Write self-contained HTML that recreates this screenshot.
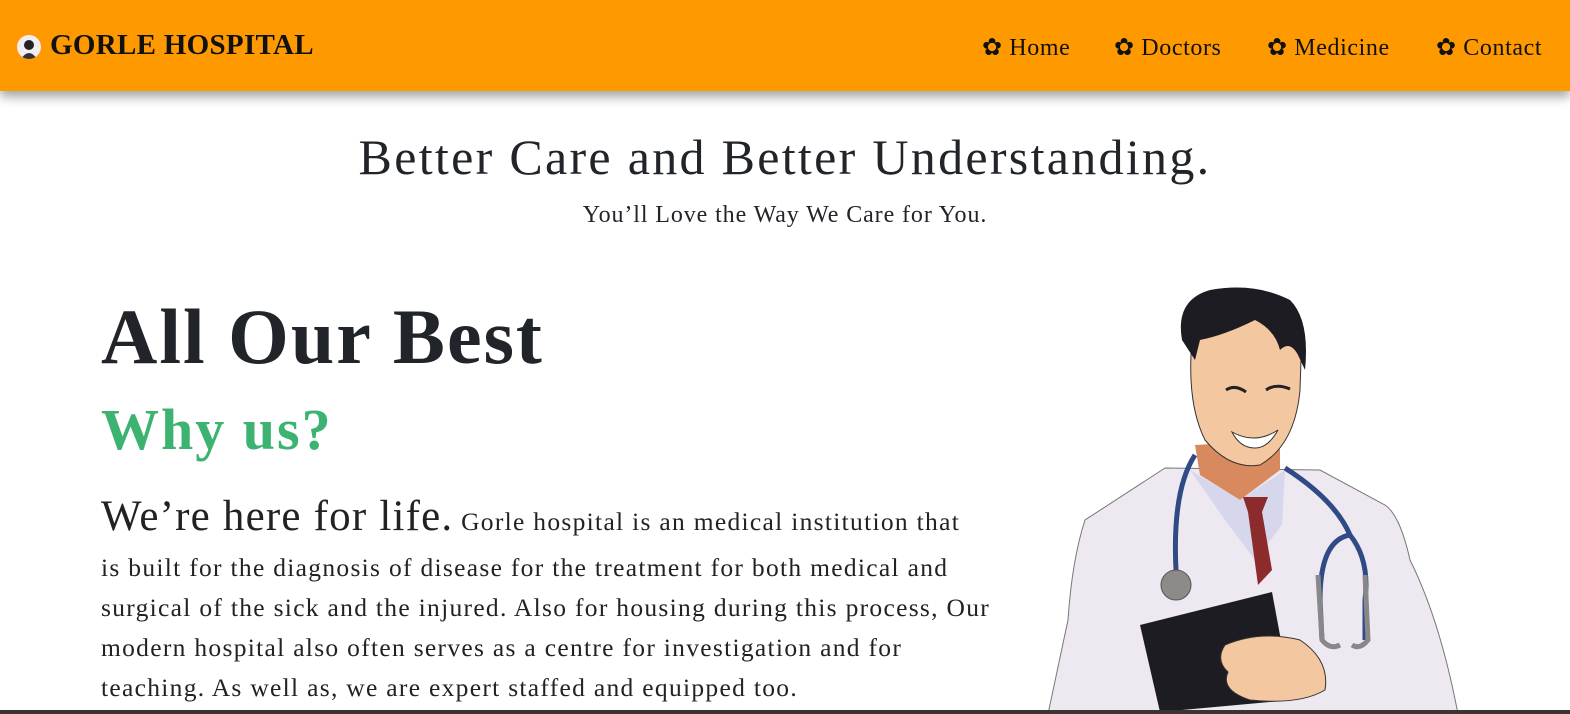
<!DOCTYPE html>
<html><head><meta charset="utf-8"><style>
*{margin:0;padding:0;box-sizing:border-box}
body{width:1570px;height:714px;overflow:hidden;background:#fff;font-family:"Liberation Serif",serif;color:#212529;position:relative}
.nav{position:absolute;left:0;top:0;width:1570px;height:91px;background:#ff9900;box-shadow:0 6px 10px rgba(0,0,0,.35);z-index:2}
.logo{position:absolute;left:50px;top:29px;font-size:29px;font-weight:bold;color:#111;letter-spacing:.3px}
.av{position:absolute;left:17px;top:35px;width:24px;height:24px;border-radius:50%;background:#f4eef4;overflow:hidden}
.nav a{position:absolute;top:33px;font-size:24px;color:#111;text-decoration:none;letter-spacing:.6px}
h1{position:absolute;left:0;width:1570px;text-align:center;top:128px;font-size:50px;font-weight:normal;letter-spacing:2.3px}
.sub{position:absolute;left:0;width:1570px;text-align:center;top:202px;font-size:24px;letter-spacing:.9px}
.best{position:absolute;left:101px;top:292px;font-size:78px;font-weight:bold;letter-spacing:2px}
.why{position:absolute;left:101px;top:396px;font-size:58px;font-weight:bold;color:#3cb371;letter-spacing:2px}
.p{position:absolute;left:101px;top:491px;width:990px;font-size:25.5px;line-height:40px;color:#222;letter-spacing:1.3px;white-space:nowrap}
.p .l1{display:block;line-height:52px}
.p b{font-size:43px;font-weight:normal;letter-spacing:1.2px}
.bar{position:absolute;left:0;top:710px;width:1570px;height:4px;background:#3a3530}
</style></head><body>
<div class="nav">
<div class="av"><svg width="24" height="24"><circle cx="12" cy="10" r="5" fill="#222"/><path d="M4 24 Q12 12 20 24Z" fill="#333"/></svg></div>
<div class="logo">GORLE HOSPITAL</div>
<a style="left:982px">✿ Home</a>
<a style="left:1114px">✿ Doctors</a>
<a style="left:1267px">✿ Medicine</a>
<a style="left:1436px">✿ Contact</a>
</div>
<h1>Better Care and Better Understanding.</h1>
<div class="sub">You’ll Love the Way We Care for You.</div>
<div class="best">All Our Best</div>
<div class="why">Why us?</div>
<div class="p"><span class="l1"><b>We’re here for life.</b> Gorle hospital is an medical institution that</span>is built for the diagnosis of disease for the treatment for both medical and<br>surgical of the sick and the injured. Also for housing during this process, Our<br>modern hospital also often serves as a centre for investigation and for<br>teaching. As well as, we are expert staffed and equipped too.</div>
<svg style="position:absolute;left:1040px;top:280px" width="420" height="434" viewBox="1040 280 420 434">
<path d="M1165 468 L1085 520 Q1072 560 1068 620 L1048 714 L1458 714 Q1440 620 1410 560 Q1400 515 1385 505 L1320 470 Z" fill="#eee9f1" stroke="#777" stroke-width="1"/>
<path d="M1195 445 L1200 475 L1240 500 L1280 470 L1280 440 Z" fill="#d9895e"/>
<path d="M1190 470 L1240 500 L1285 470 L1282 525 L1255 560 L1225 520 Z" fill="#d6d6ec"/>
<path d="M1243 497 L1268 497 L1262 512 L1272 570 L1258 585 L1248 512 Z" fill="#8c2b2b"/>
<path d="M1193 330 Q1185 400 1205 440 Q1230 470 1260 465 Q1295 445 1300 390 L1302 330 Q1250 300 1193 330Z" fill="#f3c7a0" stroke="#333" stroke-width="1"/>
<path d="M1182 340 Q1175 300 1210 290 Q1255 282 1290 300 Q1310 320 1305 370 L1298 355 Q1290 340 1280 350 Q1275 330 1255 320 Q1225 335 1200 340 L1195 360 Z" fill="#1d1c22"/>
<path d="M1232 432 Q1255 445 1278 430 Q1268 448 1255 448 Q1240 448 1232 432Z" fill="#fff" stroke="#333"/>
<path d="M1226 390 Q1235 384 1246 392 M1266 390 Q1276 383 1290 389" stroke="#222" stroke-width="3" fill="none"/>
<path d="M1195 455 Q1172 490 1176 570" stroke="#2f4a85" stroke-width="5" fill="none"/>
<circle cx="1176" cy="585" r="15" fill="#8e8a88" stroke="#555"/>
<path d="M1285 468 Q1335 500 1350 535 Q1320 540 1320 600 L1322 640 M1350 535 Q1370 560 1365 600 L1365 640" stroke="#2f4a85" stroke-width="5" fill="none"/>
<path d="M1318 575 L1322 640 Q1330 650 1340 645 M1365 575 L1368 640 Q1360 650 1352 645" stroke="#888" stroke-width="5" fill="none"/>
<path d="M1140 625 L1272 592 L1292 700 L1160 712 Z" fill="#1d1c22"/>
<path d="M1225 645 Q1260 630 1300 640 Q1330 660 1325 690 Q1300 705 1250 700 Q1220 690 1228 672 Q1215 660 1225 645Z" fill="#f3c7a0" stroke="#333" stroke-width="1"/>
</svg>
<div class="bar"></div>
</body></html>
